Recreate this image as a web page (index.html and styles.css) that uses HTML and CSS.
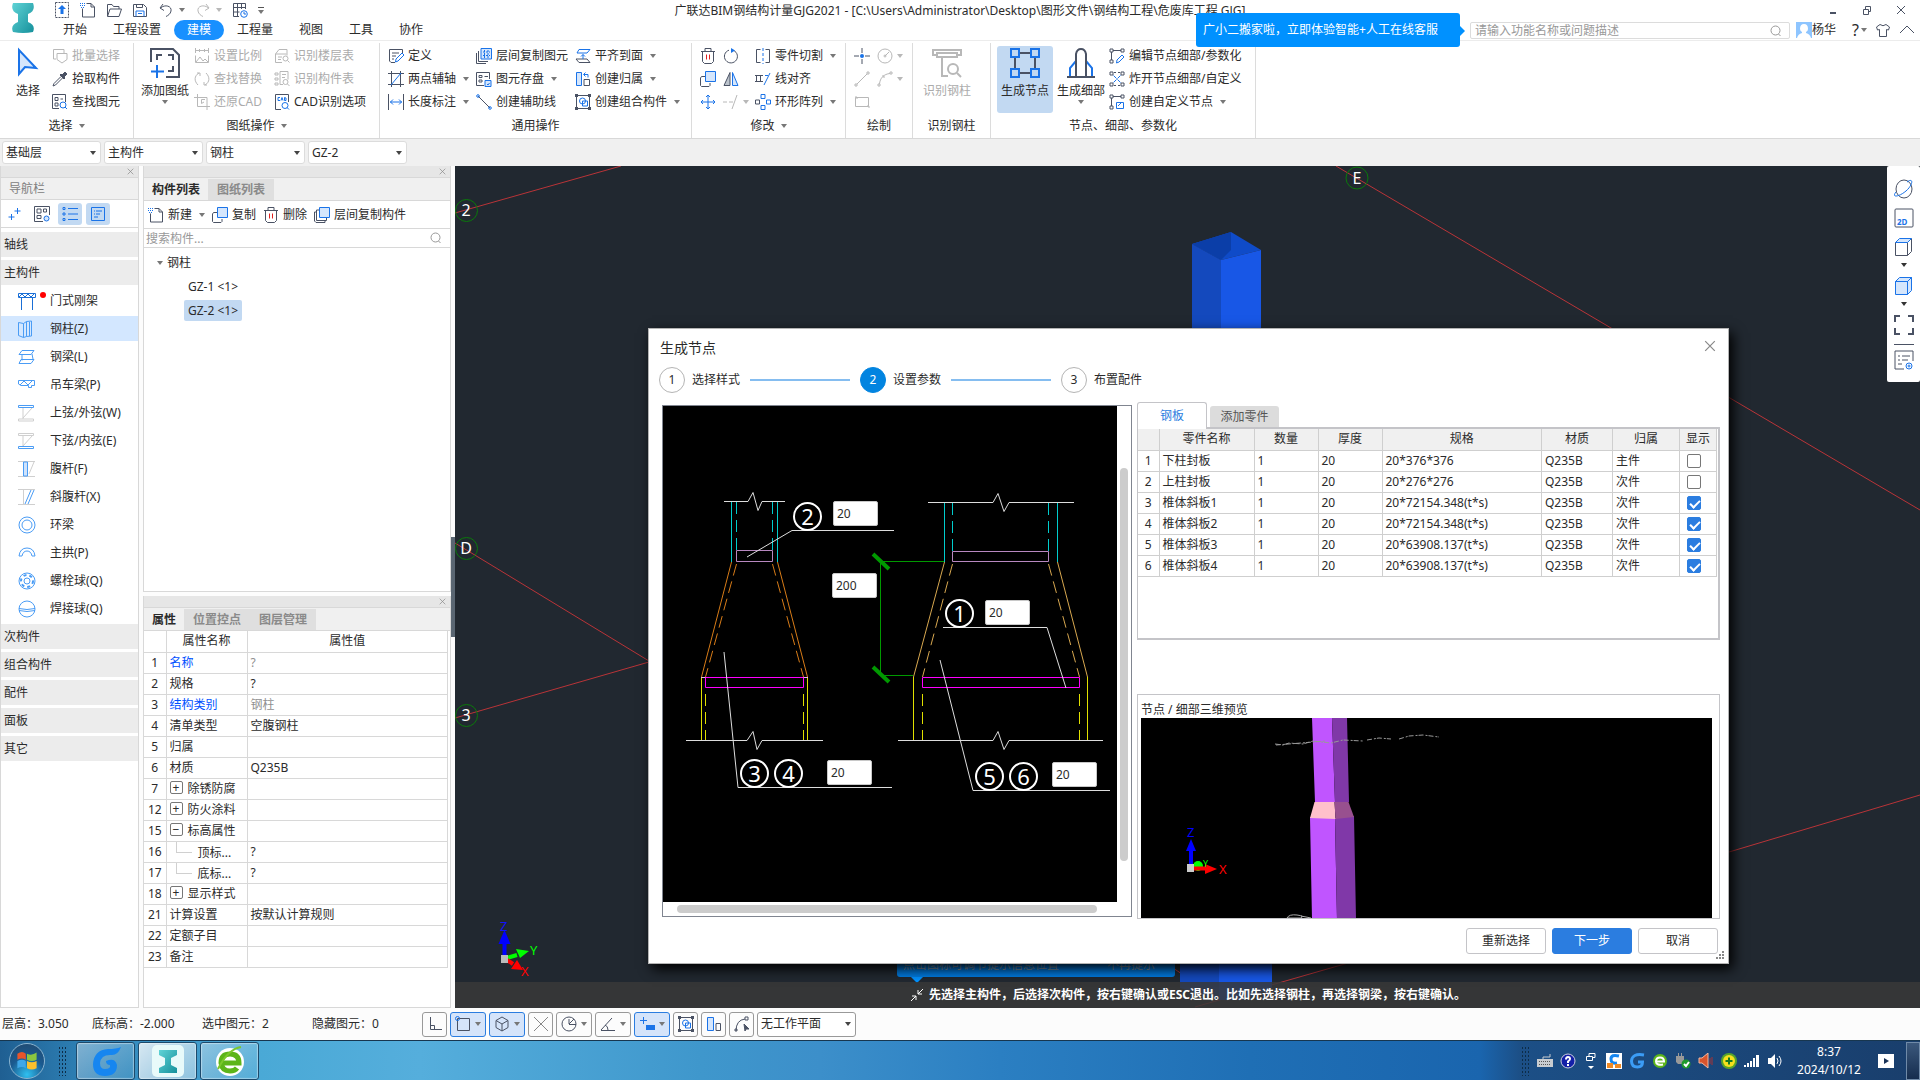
FILE: index.html
```html
<!DOCTYPE html>
<html lang="zh-CN">

<head>
    <meta charset="UTF-8">
    <meta name="viewport" content="width=device-width, initial-scale=1.0">
    <title>广联达BIM钢结构计量GJG2021</title>
    <link rel="stylesheet" href="styles.css">
</head>

<body>
    <!-- Shared icons -->
    <svg class="sprite" aria-hidden="true">
        <symbol id="i-upload" viewBox="0 0 16 16"><path stroke-dasharray="2 1" d="M1.500 .5h13v15h-13z"/><path class="af" d="M8 3l4 4H9.500v5h-3V7H4z"/></symbol>
        <symbol id="i-new" viewBox="0 0 16 16"><path d="M6.500 1.500H11L14.500 5v10h-12V6.500M11 1.500V5h3.500"/><path class="a" stroke-dasharray="1 1" d="M0 1.500h5M0 3.500h5M1 5.500h4"/></symbol>
        <symbol id="i-open" viewBox="0 0 16 16"><path d="M1.500 14V2.500h4.500l1.500 2h5.500V7M1.500 14.500L4 7h11.500L13 14.500z"/></symbol>
        <symbol id="i-save" viewBox="0 0 16 16"><path d="M1.500 2.500h10l3 3v9h-13zM4.500 2.500v3h6v-3"/><path class="a" d="M4 14.500v-5.500h8v5.500M6 11.500h4"/></symbol>
        <symbol id="i-undo" viewBox="0 0 16 16"><path d="M5 2L2 6l4 2.500M2.500 6C7 2 14 4 13 9c-.5 3-3 4.500-5 5.500"/></symbol>
        <symbol id="i-redo" viewBox="0 0 16 16"><path d="M11 2l3 4-4 2.500M13.500 6C9 2 2 4 3 9c.5 3 3 4.500 5 5.500"/></symbol>
        <symbol id="i-grid" viewBox="0 0 16 16"><path d="M7 14.500H1.500v-13h12V7M1.500 5.500h12M1.500 10h6M5.500 1.500v13M9.500 1.500V7"/><circle class="a" cx="12" cy="12" r="3.300"/><path class="a" d="M12 10v2h2"/></symbol>
        <symbol id="i-batch" viewBox="0 0 16 16"><path d="M12 6V1.500H1.500V11H4M5 5.500h10v6L10 15l-5-3.500z"/></symbol>
        <symbol id="i-pick" viewBox="0 0 16 16"><path class="df" d="M8 4l4 4 1-1-1-1 3-3-2-2-3 3-1-1z"/><path d="M9 5.500L2 12.500 1 15l2.500-1 7-7"/></symbol>
        <symbol id="i-find" viewBox="0 0 16 16"><path d="M7 14.500H.500V.500h13V8M3 3.500h3v3H3zM3 9h3v3H3zM8.500 5H11"/><circle class="a" cx="11" cy="11" r="3"/><path class="a" d="M13 13l2 2"/></symbol>
        <symbol id="i-scale" viewBox="0 0 16 16"><path d="M1 2.500h14M1.500 0v5M14.500 0v5M5.500 1v3M10.500 1v3M1.500 7.500v7h13v-7M2 14l4-5 3 4 2-2 3 3"/></symbol>
        <symbol id="i-swap" viewBox="0 0 16 16"><path d="M4 14c-4-4-4-9 1-12M3 2h3v3M12 2c4 4 4 9-1 12M13 14h-3v-3"/></symbol>
        <symbol id="i-restore" viewBox="0 0 16 16"><path d="M3.500 0v12.500H16M0 3.500h13V16M11 5.500H7.500v4L10 8"/></symbol>
        <symbol id="i-table" viewBox="0 0 16 16"><path d="M8 14.500H1.500V6L5 1.500h8v6M1.500 6h11M4 9h4M4 11.500h3"/><circle cx="11.500" cy="10.500" r="2.500"/><path d="M13.500 12.500l2 2"/></symbol>
        <symbol id="i-parts" viewBox="0 0 16 16"><path d="M6 .500h8v8M6 .500v13h3M8 3.500h4M8 6.500h3M1 2h3v2H1zM1 7h3v2H1zM1 12h3v2H1z"/><circle cx="11.500" cy="11" r="2.500"/><path d="M13.500 13l2 2"/></symbol>
        <symbol id="i-cad" viewBox="0 0 16 16"><path d="M7 15.500H1.500V.500h13V8"/><path class="a" d="M6 3.500H4v3h2M7 6.500l1-3 1 3M10.500 3.500v3h1.500V4z"/><circle class="a" cx="11" cy="11.500" r="3"/><path class="a" d="M13 13.500l2 2"/></symbol>
        <symbol id="i-define" viewBox="0 0 16 16"><path d="M7 14.500H3L1.500 13V1.500h13V5M4 5h7M4 8h4M4 11h2"/><path class="a" d="M7.500 14l.5-3 6-6 2 2-6 6z"/></symbol>
        <symbol id="i-axis" viewBox="0 0 16 16"><path d="M3.500 0v16M12.500 0v16M0 2.500h16M0 13.500h16"/><path class="a" d="M3 14L13 2"/></symbol>
        <symbol id="i-length" viewBox="0 0 16 16"><path d="M.500 0v16M15.500 0v16"/><path class="a" d="M2 8h12M5 5.500L2.500 8 5 10.500M11 5.500L13.500 8 11 10.500"/></symbol>
        <symbol id="i-layercopy" viewBox="0 0 16 16"><path d="M.500 5v10.500H10M2.500 3v10.500H12"/><path class="al" d="M5 .500h10.500V11H5z"/><path class="a" stroke-dasharray="2 1" d="M7 4h7M7 7.500h7M8.500 2v8M12 2v8"/></symbol>
        <symbol id="i-archive" viewBox="0 0 16 16"><path d="M8 14.500H.500V1.500h13V8M3 4.500h3v2H3zM3 9h3v2H3zM8.500 5.500H12"/><path class="al" d="M9 9.500h6v6H9z"/><path class="a" d="M11 13l1 1 1.500-2"/></symbol>
        <symbol id="i-auxline" viewBox="0 0 16 16"><path d="M2 2l12 12"/><circle class="a" cx="2" cy="2" r="1.300"/><circle class="a" cx="14" cy="14" r="1.300"/></symbol>
        <symbol id="i-align" viewBox="0 0 16 16"><path class="a" d="M4 1.500h11L12 5H2z"/><path d="M4 14.500h11L12 11H1z"/><path class="a" d="M8 11V6.500M6 8.500l2-2 2 2"/></symbol>
        <symbol id="i-owner" viewBox="0 0 16 16"><path class="al" d="M1.500 1.500h5v13h-5z"/><path d="M9 8.500h5.500v6H9z"/><path class="a" d="M9 3.500h4v3M10.500 1.500L8.500 3.500l2 2"/></symbol>
        <symbol id="i-group" viewBox="0 0 16 16"><path d="M1.500 1.500h13v13h-13z"/><circle class="a" cx="7.500" cy="7" r="3"/><path class="a" d="M7.500 7h5v5h-5z"/><path class="df" stroke="none" d="M0 0h3v3H0zM13 0h3v3h-3zM0 13h3v3H0zM13 13h3v3h-3z"/></symbol>
        <symbol id="i-trash" viewBox="0 0 16 16"><path d="M1 3.500h14M5 3V.500h6V3M2.500 4v9.500l2 2h7l2-2V4"/><path class="r" d="M6.500 6.500v5M9.500 6.500v5"/></symbol>
        <symbol id="i-rotate" viewBox="0 0 16 16"><path d="M9 2A6.500 6.500 0 1 1 6 2.200"/><path class="af" d="M8 0l4 2.500L8 5z"/></symbol>
        <symbol id="i-copy" viewBox="0 0 16 16"><path d="M5 5.500H1.500L.500 7v7.500l1 1H9l1-1V12"/><path class="al" d="M5.500 .500h10v10h-10z"/></symbol>
        <symbol id="i-copies" viewBox="0 0 16 16"><path d="M3 5H.500v9l1.500 1.500h9V13M5.500 3H2.500v10.500h10V11"/><path class="al" d="M5.500 .500h10v10h-10z"/></symbol>
        <symbol id="i-mirror" viewBox="0 0 16 16"><path fill="#bcc3cc" d="M7 1.500v13H1z"/><path class="al" d="M9.500 1.500v13H15z"/></symbol>
        <symbol id="i-move" viewBox="0 0 16 16"><path class="a" d="M8 1v14M1 8h14M6 3l2-2 2 2M6 13l2 2 2-2M3 6L1 8l2 2M13 6l2 2-2 2"/></symbol>
        <symbol id="i-extend" viewBox="0 0 16 16"><path d="M0 8h4M6 8h4M14 1L9 15"/></symbol>
        <symbol id="i-cut" viewBox="0 0 16 16"><path d="M5.500 1.500h-4v13h4M10.500 1.500h4v13h-4"/><path class="a" stroke-dasharray="3 2" d="M8 0v16"/></symbol>
        <symbol id="i-linealign" viewBox="0 0 16 16"><path d="M0 4.500h8M0 10.500h8M1.500 4v6M5.500 4v6"/><path class="a" d="M15 2L9 14M10 4.500h3"/></symbol>
        <symbol id="i-array" viewBox="0 0 16 16"><path class="a" d="M6 .500h4v4H6zM6 11.500h4v4H6zM11.500 6h4v4h-4z"/><path d="M.500 6h4v4h-4z"/></symbol>
        <symbol id="i-point" viewBox="0 0 16 16"><path d="M8 0v5M8 11v5M0 8h5M11 8h5"/><circle class="af" cx="8" cy="8" r="2"/></symbol>
        <symbol id="i-circle" viewBox="0 0 16 16"><circle cx="8" cy="8" r="7"/><path d="M8 8l4-4"/><circle cx="8" cy="8" r="1"/></symbol>
        <symbol id="i-line" viewBox="0 0 16 16"><path d="M3 13L13 3M1 13h2v2H1zM13 1h2v2h-2z"/></symbol>
        <symbol id="i-arc" viewBox="0 0 16 16"><path d="M2.500 13C3 7 7 3 13 2.500M1 13h2v2H1zM13 1h2v2h-2zM5 5h2v2"/></symbol>
        <symbol id="i-rect" viewBox="0 0 16 16"><path d="M1.500 3.500h13v9h-13zM1 3h2v2M13 12h2v2"/></symbol>
        <symbol id="i-nodeedit" viewBox="0 0 16 16"><path d="M1 1h3v3H1zM12 1h3v3h-3zM1 12h3v3H1zM4 2.500h8M2.500 4v8"/><path class="a" d="M7.500 15l.5-3 5-5 2 2-5 5z"/></symbol>
        <symbol id="i-nodeburst" viewBox="0 0 16 16"><path d="M1 1h3v3H1zM12 1h3v3h-3zM1 12h3v3H1zM12 12h3v3h-3zM5 1.500h2M9 1.500h2M5 14.500h2M9 14.500h2"/><path class="a" d="M4.500 4.500l3 3M11.500 4.500l-3 3M4.500 11.500l3-3M11.500 11.500l-3-3"/></symbol>
        <symbol id="i-nodenew" viewBox="0 0 16 16"><path d="M1 1h3v3H1zM12 1h3v3h-3zM1 12h3v3H1zM4 2.500h8M2.500 4v8"/><path class="a" d="M7.500 8.500h7v6h-7zM9 12l4-4"/></symbol>
        <symbol id="i-search" viewBox="0 0 12 12"><circle cx="5.500" cy="5.500" r="4.500"/><path d="M8.500 9l2 2"/></symbol>
        <symbol id="i-x" viewBox="0 0 10 10"><path d="M1 1l8 8M9 1L1 9"/></symbol>
        <symbol id="i-cube" viewBox="0 0 20 20"><path d="M1.500 5.500h12v13h-12zM13.500 18.500l4-4v-13"/><path class="al" d="M1.500 5.500l4-4h12l-4 4z"/></symbol>
        <symbol id="i-cube2" viewBox="0 0 20 20"><path class="al" d="M1.500 5.500h12v13h-12zM13.500 18.500l4-4v-13l-4 4zM1.500 5.500l4-4h12l-4 4z"/></symbol>
    </svg>

    <header class="header">
        <svg class="logo" viewBox="4 2 22 32">
            <defs><linearGradient id="teal" x1="0" y1="0" x2="1" y2="1"><stop offset="0" stop-color="#5fd3d6"/><stop offset="1" stop-color="#15909b"/></linearGradient></defs>
            <path fill="url(#teal)" d="M5 3h20q3 8-5 11v8q8 3 5 10-10 2-20 0-3-7 5-10v-8Q2 11 5 3z"/>
        </svg>
        <div class="quick">
            <button><svg class="icon"><use href="#i-upload"/></svg></button>
            <button><svg class="icon"><use href="#i-new"/></svg></button>
            <button><svg class="icon"><use href="#i-open"/></svg></button>
            <button><svg class="icon"><use href="#i-save"/></svg></button>
            <button><svg class="icon"><use href="#i-undo"/></svg><i class="caret"></i></button>
            <button class="off"><svg class="icon"><use href="#i-redo"/></svg><i class="caret"></i></button>
            <button><svg class="icon"><use href="#i-grid"/></svg></button>
            <button class="more"><i class="caret"></i></button>
        </div>
        <div class="title">广联达BIM钢结构计量GJG2021 - [C:\Users\Administrator\Desktop\图形文件\钢结构工程\危废库工程.GJG]</div>
        <div class="winctl">
            <button><svg width="10" height="10"><path d="M2 8h6" stroke-width="2"/></svg></button>
            <button><svg width="10" height="10"><path d="M1.500 4.500h5v5h-5zM3.500 4V1.500h5v5H7"/></svg></button>
            <button><svg width="10" height="10"><use href="#i-x"/></svg></button>
        </div>
        <nav class="menu">
            <a href="#">开始</a>
            <a href="#">工程设置</a>
            <a href="#" class="active">建模</a>
            <a href="#">工程量</a>
            <a href="#">视图</a>
            <a href="#">工具</a>
            <a href="#">协作</a>
        </nav>
        <div class="account">
            <div class="search">
                <div class="bubble">广小二搬家啦，立即体验智能+人工在线客服</div>
                <input type="text" aria-label="搜索功能" placeholder="请输入功能名称或问题描述">
                <svg class="search-icon"><use href="#i-search"/></svg>
            </div>
            <svg class="avatar" viewBox="0 0 16 16"><rect width="16" height="16" fill="#8ec5ff"/><path fill="#fff" d="M8 2q4 0 4 5 0 2-2 3v1q4 1 5 5H1q1-4 5-5v-1Q4 9 4 7q0-5 4-5z"/></svg>
            <span class="user">杨华</span>
            <button class="help">?<i class="caret"></i></button>
            <button><svg class="icon" viewBox="0 0 16 16"><path d="M5 2.500L1.500 5l1 3 2-.5v7h7v-7l2 .5 1-3L11 2.500Q8 5 5 2.500z"/></svg></button>
            <button><svg class="icon" viewBox="0 0 16 16"><path d="M1 11l7-7 7 7"/></svg></button>
        </div>
    </header>

    <div class="ribbon">
        <section class="group g-select">
            <div class="group-body">
                <button class="big"><svg class="big-icon" viewBox="0 0 32 32"><path class="al" stroke-width="2" d="M7 3v24l6-7 11 1z"/></svg>选择</button>
                <div class="stack">
                    <button class="cmd off"><svg class="icon"><use href="#i-batch"/></svg>批量选择</button>
                    <button class="cmd"><svg class="icon"><use href="#i-pick"/></svg>拾取构件</button>
                    <button class="cmd"><svg class="icon"><use href="#i-find"/></svg>查找图元</button>
                </div>
            </div>
            <h2>选择<i class="caret"></i></h2>
        </section>
        <section class="group g-sheet">
            <div class="group-body">
                <button class="big"><svg class="big-icon" viewBox="0 0 32 32"><path stroke-width="2" d="M2 15V2h22l6 6v22H17M8 13V8h5M19 8h5v5M24 19v5h-5"/><path class="a" stroke-width="2" d="M8 18v13M2 24.500h13"/></svg>添加图纸<i class="caret"></i></button>
                <div class="stack">
                    <button class="cmd off"><svg class="icon"><use href="#i-scale"/></svg>设置比例</button>
                    <button class="cmd off"><svg class="icon"><use href="#i-swap"/></svg>查找替换</button>
                    <button class="cmd off"><svg class="icon"><use href="#i-restore"/></svg>还原CAD</button>
                </div>
                <div class="stack">
                    <button class="cmd off"><svg class="icon"><use href="#i-table"/></svg>识别楼层表</button>
                    <button class="cmd off"><svg class="icon"><use href="#i-parts"/></svg>识别构件表</button>
                    <button class="cmd"><svg class="icon"><use href="#i-cad"/></svg>CAD识别选项</button>
                </div>
            </div>
            <h2>图纸操作<i class="caret"></i></h2>
        </section>
        <section class="group g-common">
            <div class="group-body">
                <div class="stack">
                    <button class="cmd"><svg class="icon"><use href="#i-define"/></svg>定义</button>
                    <button class="cmd"><svg class="icon"><use href="#i-axis"/></svg>两点辅轴<i class="caret"></i></button>
                    <button class="cmd"><svg class="icon"><use href="#i-length"/></svg>长度标注<i class="caret"></i></button>
                </div>
                <div class="stack">
                    <button class="cmd"><svg class="icon"><use href="#i-layercopy"/></svg>层间复制图元</button>
                    <button class="cmd"><svg class="icon"><use href="#i-archive"/></svg>图元存盘<i class="caret"></i></button>
                    <button class="cmd"><svg class="icon"><use href="#i-auxline"/></svg>创建辅助线</button>
                </div>
                <div class="stack">
                    <button class="cmd"><svg class="icon"><use href="#i-align"/></svg>平齐到面<i class="caret"></i></button>
                    <button class="cmd"><svg class="icon"><use href="#i-owner"/></svg>创建归属<i class="caret"></i></button>
                    <button class="cmd"><svg class="icon"><use href="#i-group"/></svg>创建组合构件<i class="caret"></i></button>
                </div>
            </div>
            <h2>通用操作</h2>
        </section>
        <section class="group g-modify">
            <div class="group-body">
                <div class="stack pairs">
                    <button class="cmd"><svg class="icon"><use href="#i-trash"/></svg></button>
                    <button class="cmd"><svg class="icon"><use href="#i-rotate"/></svg></button>
                    <button class="cmd"><svg class="icon"><use href="#i-copy"/></svg></button>
                    <button class="cmd"><svg class="icon"><use href="#i-mirror"/></svg></button>
                    <button class="cmd"><svg class="icon"><use href="#i-move"/></svg></button>
                    <button class="cmd off"><svg class="icon"><use href="#i-extend"/></svg><i class="caret"></i></button>
                </div>
                <div class="stack">
                    <button class="cmd"><svg class="icon"><use href="#i-cut"/></svg>零件切割<i class="caret"></i></button>
                    <button class="cmd"><svg class="icon"><use href="#i-linealign"/></svg>线对齐</button>
                    <button class="cmd"><svg class="icon"><use href="#i-array"/></svg>环形阵列<i class="caret"></i></button>
                </div>
            </div>
            <h2>修改<i class="caret"></i></h2>
        </section>
        <section class="group g-draw">
            <div class="group-body">
                <div class="stack pairs">
                    <button class="cmd"><svg class="icon"><use href="#i-point"/></svg></button>
                    <button class="cmd off"><svg class="icon"><use href="#i-circle"/></svg><i class="caret"></i></button>
                    <button class="cmd off"><svg class="icon"><use href="#i-line"/></svg></button>
                    <button class="cmd off"><svg class="icon"><use href="#i-arc"/></svg><i class="caret"></i></button>
                    <button class="cmd off"><svg class="icon"><use href="#i-rect"/></svg></button>
                </div>
            </div>
            <h2>绘制</h2>
        </section>
        <section class="group g-detect">
            <div class="group-body">
                <button class="big off"><svg class="big-icon" viewBox="0 0 32 32"><path stroke-width="2" d="M6 8H2V3h28v5h-4M6 6h20v4H6zM11 10v19h6"/><circle stroke-width="2" cx="22" cy="22" r="5"/><path stroke-width="2" d="M26 26l4 4"/></svg>识别钢柱</button>
            </div>
            <h2>识别钢柱</h2>
        </section>
        <section class="group g-node">
            <div class="group-body">
                <button class="big on"><svg class="big-icon" viewBox="0 0 32 32"><path stroke-width="2" d="M10 6h12M10 26h12M6 10v12M26 10v12"/><path class="a" stroke-width="2" d="M2 2h8v8H2zM22 2h8v8h-8zM2 22h8v8H2zM22 22h8v8h-8z"/></svg>生成节点</button>
                <button class="big"><svg class="big-icon" viewBox="0 0 32 32"><path class="a" stroke-width="2" d="M11 14l-6 7v8M21 14l6 7v8M11 20v9M21 20v9"/><path stroke-width="2" d="M2 30h28M11 29V7q1-5 5-5t5 5v22"/></svg>生成细部<i class="caret"></i></button>
                <div class="stack">
                    <button class="cmd"><svg class="icon"><use href="#i-nodeedit"/></svg>编辑节点细部/参数化</button>
                    <button class="cmd"><svg class="icon"><use href="#i-nodeburst"/></svg>炸开节点细部/自定义</button>
                    <button class="cmd"><svg class="icon"><use href="#i-nodenew"/></svg>创建自定义节点<i class="caret"></i></button>
                </div>
            </div>
            <h2>节点、细部、参数化</h2>
        </section>
    </div>

    <div class="filters">
        <label class="combo"><select aria-label="楼层"><option>基础层</option></select></label>
        <label class="combo"><select aria-label="构件大类"><option>主构件</option></select></label>
        <label class="combo"><select aria-label="构件类型"><option>钢柱</option></select></label>
        <label class="combo"><select aria-label="构件"><option>GZ-2</option></select></label>
    </div>

    <main class="workspace">
        <aside class="navpane">
            <div class="strip"><button><svg class="x"><use href="#i-x"/></svg></button></div>
            <div class="pane-title">导航栏</div>
            <div class="nav-tools">
                <button><svg class="icon" viewBox="0 0 16 16"><path class="a" d="M11.500 2v6M8.500 5h6M5.500 8v6M2.500 11h6"/></svg></button>
                <button><svg class="icon" viewBox="0 0 16 16"><path d="M9 15.500H.500V.500h15V9M3 3h4v4H3zM9.500 3h3v3h-3zM3 9.500h4v3H3z"/><circle class="al" cx="12.500" cy="12.500" r="2.500"/></svg></button>
                <button class="on"><svg class="icon" viewBox="0 0 16 16"><path class="a" d="M6 2.500h10M6 8h10M6 13.500h10M1 1.500h2v2H1zM1 7h2v2H1zM1 12.500h2v2H1z"/></svg></button>
                <button class="on"><svg class="icon" viewBox="0 0 16 16"><path class="a" d="M1.500 1.500h13v13h-13zM4 5h1M6 5h6M4 8h1M6 8h4M4 11h4"/></svg></button>
            </div>
            <div class="nav-list">
                <button class="nav-head">轴线</button>
                <button class="nav-head">主构件</button>
                <button class="nav-item dot"><svg viewBox="0 0 18 18"><path d="M.500 1.500h17v4H.500zM1 5l3-3 3 3 3-3 3 3 3-3M3.500 6v12M14.500 6v12" stroke="#1a6fd6"/></svg>门式刚架</button>
                <button class="nav-item on"><svg viewBox="0 0 18 18"><path d="M.500 2.500l5 1v14l-5-2zM5.500 3.500l3-2 5-.5v15l-5 .5-3 1M8.500 1.500v15M11.500 2v14"/></svg>钢柱(Z)</button>
                <button class="nav-item"><svg viewBox="0 0 18 18"><path d="M4 2.500h12l-3 4H1zM4 6.500v6M14 6l1 5M3 11.500h13l-3 4H1z"/></svg>钢梁(L)</button>
                <button class="nav-item"><svg viewBox="0 0 18 18"><path d="M.500 4.500h16v5h-3v2h-3v-2H3L.500 8zM2 9l4-4 4 4 4-4"/></svg>吊车梁(P)</button>
                <button class="nav-item"><svg viewBox="0 0 18 18"><path class="g" d="M5 4v11M5 14L14 4M.500 15h15v2H.500z"/><path d="M.500 1.500h15v2H.500z"/></svg>上弦/外弦(W)</button>
                <button class="nav-item"><svg viewBox="0 0 18 18"><path class="g" d="M5 4v11M5 14L14 4M.500 1.500h15v2H.500z"/><path d="M.500 14.500h15v2H.500z"/></svg>下弦/内弦(E)</button>
                <button class="nav-item"><svg viewBox="0 0 18 18"><path class="g" d="M0 1.500h17M0 16.500h17M11 14L16 2"/><path fill="#cfe3fc" d="M5.500 2v14h4V2z"/></svg>腹杆(F)</button>
                <button class="nav-item"><svg viewBox="0 0 18 18"><path class="g" d="M0 1.500h17M0 16.500h17M5.500 2v14"/><path d="M7 16l6-14M10 16l6-14"/></svg>斜腹杆(X)</button>
                <button class="nav-item"><svg viewBox="0 0 18 18"><circle cx="9" cy="9" r="8"/><circle cx="9" cy="9" r="5"/></svg>环梁</button>
                <button class="nav-item"><svg viewBox="0 0 18 18"><path d="M1 12q1-8 8-8t8 8h-3q-1-5-5-5t-5 5z"/></svg>主拱(P)</button>
                <button class="nav-item"><svg viewBox="0 0 18 18"><circle cx="9" cy="9" r="8"/><circle cx="9" cy="9" r="3"/><circle cx="9" cy="9" r="6" stroke-width="2" stroke-dasharray="3 3"/></svg>螺栓球(Q)</button>
                <button class="nav-item"><svg viewBox="0 0 18 18"><circle cx="9" cy="9" r="8"/><path d="M1 8.500q8 2 16 0M1 10.500q8 2 16 0"/></svg>焊接球(Q)</button>
                <button class="nav-head">次构件</button>
                <button class="nav-head">组合构件</button>
                <button class="nav-head">配件</button>
                <button class="nav-head">面板</button>
                <button class="nav-head">其它</button>
            </div>
        </aside>

        <div class="side">
            <section class="panel list-panel">
                <div class="strip"><button><svg class="x"><use href="#i-x"/></svg></button></div>
                <div class="tabs"><button class="active">构件列表</button><button>图纸列表</button></div>
                <div class="list-tools">
                    <button class="cmd"><svg class="icon"><use href="#i-new"/></svg>新建<i class="caret"></i></button>
                    <button class="cmd"><svg class="icon"><use href="#i-copy"/></svg>复制</button>
                    <button class="cmd"><svg class="icon"><use href="#i-trash"/></svg>删除</button>
                    <button class="cmd"><svg class="icon"><use href="#i-copies"/></svg>层间复制构件</button>
                </div>
                <div class="list-search">
                    <input type="text" aria-label="搜索构件" placeholder="搜索构件...">
                    <svg class="search-icon"><use href="#i-search"/></svg>
                </div>
                <ul class="tree">
                    <li><i class="caret"></i>钢柱
                        <ul>
                            <li><span>GZ-1 &lt;1&gt;</span></li>
                            <li><span class="on">GZ-2 &lt;1&gt;</span></li>
                        </ul>
                    </li>
                </ul>
            </section>
            <section class="panel prop-panel">
                <div class="strip"><button><svg class="x"><use href="#i-x"/></svg></button></div>
                <div class="tabs"><button class="active">属性</button><button>位置控点</button><button>图层管理</button></div>
                <table class="props">
                    <thead><tr><th class="c-num"></th><th class="c-name">属性名称</th><th>属性值</th></tr></thead>
                    <tbody>
                        <tr><td>1</td><td class="key">名称</td><td class="dim">?</td></tr>
                        <tr><td>2</td><td>规格</td><td>?</td></tr>
                        <tr><td>3</td><td class="key">结构类别</td><td class="dim">钢柱</td></tr>
                        <tr><td>4</td><td>清单类型</td><td>空腹钢柱</td></tr>
                        <tr><td>5</td><td>归属</td><td></td></tr>
                        <tr><td>6</td><td>材质</td><td>Q235B</td></tr>
                        <tr><td>7</td><td><button class="fold">+</button>除锈防腐</td><td></td></tr>
                        <tr><td>12</td><td><button class="fold">+</button>防火涂料</td><td></td></tr>
                        <tr><td>15</td><td><button class="fold">−</button>标高属性</td><td></td></tr>
                        <tr><td>16</td><td><i class="branch"></i>顶标...</td><td>?</td></tr>
                        <tr><td>17</td><td><i class="branch"></i>底标...</td><td>?</td></tr>
                        <tr><td>18</td><td><button class="fold">+</button>显示样式</td><td></td></tr>
                        <tr><td>21</td><td>计算设置</td><td>按默认计算规则</td></tr>
                        <tr><td>22</td><td>定额子目</td><td></td></tr>
                        <tr><td>23</td><td>备注</td><td></td></tr>
                    </tbody>
                </table>
            </section>
        </div>
        <div class="splitter"><button aria-label="收起"></button></div>

        <div class="viewport">
            <svg class="scene" width="100%" height="100%">
                <g stroke="#b93438" fill="none">
                    <path d="M0 47L166 0M0 377L194 495M0 552L194 496M881 0L1465 344M1274 686L1465 629M900 795L740 841M700 790L760 830"/>
                </g>
                <g class="bubbles">
                    <circle cx="11.500" cy="44.500" r="11"/><circle cx="11.500" cy="382.500" r="11"/><circle cx="11.500" cy="549.500" r="11"/><circle cx="902" cy="12" r="11"/>
                    <text x="11" y="50">2</text><text x="11" y="388">D</text><text x="11" y="555">3</text><text x="902" y="18">E</text>
                </g>
                <path fill="#0f4bc8" d="M737 78l39-12 30 18-40 10z"/>
                <path fill="#0b3ea8" d="M737 78l39-12v18l-10 10z"/>
                <path fill="#1449bd" d="M737 78l29 16v106h-29zM725 790h39v44l-39-12z"/>
                <path fill="#1857e6" d="M766 94l40-10v116h-40zM764 790h53v32l-30 12h-23z"/>
                <g stroke-width="4">
                    <path stroke="#00f" d="M49.500 792v-18"/><path fill="#00f" d="M49.500 764l-6 14h12z"/>
                    <path stroke="#0f0" d="M52 792l10-3"/><path fill="#0f0" d="M74 785l-13-2 4 9z"/>
                    <path stroke="#f00" d="M52 794l6 4"/><path fill="#f00" d="M68 804l-12-1 6-9z"/>
                    <path fill="#bbb" d="M46 789h7v8h-7z"/>
                </g>
                <g class="axis-text"><text x="45" y="765" fill="#11f">Z</text><text x="75" y="789" fill="#0f0">Y</text><text x="66" y="810" fill="#f00">X</text></g>
            </svg>
            <div class="tip"><span>点击图标可调节提示信息位置</span><span>不再提示</span></div>
            <div class="hint"><svg class="icon" viewBox="0 0 16 16"><path d="M14 2L9 7M9 3v4h4M2 14l5-5M3 9h4v4"/></svg>先选择主构件，后选择次构件，按右键确认或ESC退出。比如先选择钢柱，再选择钢梁，按右键确认。</div>

            <div class="view-tools">
                <button><svg viewBox="0 0 20 20"><ellipse cx="10" cy="10" rx="8" ry="9"/><path class="a" d="M2 13C-3 19 5 18 12 12s8-14 1-9"/></svg></button>
                <button><svg viewBox="0 0 20 20"><rect x="1" y="1" width="18" height="18" rx="1"/><text x="3" y="17">2D</text></svg></button>
                <button><svg><use href="#i-cube"/></svg><i class="caret"></i></button>
                <button><svg><use href="#i-cube2"/></svg><i class="caret"></i></button>
                <button><svg viewBox="0 0 20 20"><path stroke-width="2" d="M1 7V1h5M14 1h5v6M19 13v6h-5M6 19H1v-6"/></svg></button>
                <button class="last"><svg viewBox="0 0 20 20"><path d="M10 19H1V1h18v10M4 6h2M8 6h8M4 10h2M8 10h6M4 14h4"/><circle class="a" cx="15" cy="16" r="3"/><circle class="a" cx="15" cy="16" r="1"/></svg></button>
            </div>

            <div class="dialog" role="dialog" aria-label="生成节点">
                <div class="dialog-head"><h1>生成节点</h1><button aria-label="关闭"><svg width="12" height="12"><use href="#i-x"/></svg></button></div>
                <ol class="steps">
                    <li><b>1</b>选择样式</li>
                    <li class="on"><b>2</b>设置参数</li>
                    <li><b>3</b>布置配件</li>
                </ol>
                <div class="dialog-body">
                    <div class="cad">
                        <div class="cad-canvas">
                            <svg viewBox="0 0 454 496">
                                <!-- left section -->
                                <g stroke="#0cc"><path d="M68.500 96v60M114.500 96v60"/><path class="dash" d="M73.500 96v48M109.500 96v48"/></g>
                                <path stroke="#b888c0" d="M73.500 144.500h36v11h-36z"/>
                                <g stroke="#d87c18"><path d="M68.500 156l-30 115M114.500 156l30 115"/><path class="dash" d="M73.500 158l-31 113M109.500 158l31 113"/></g>
                                <g stroke="#e0e000"><path d="M38.500 271v63M144.500 271v63"/><path class="dash" d="M42.500 288v46M140.500 288v46"/></g>
                                <path stroke="#e8b8e8" d="M38 271.500h107"/>
                                <path stroke="#f0f" d="M42.500 271.500h98v10h-98z"/>
                                <!-- right section -->
                                <g stroke="#0cc"><path d="M281.500 97v59M394.500 97v59"/><path class="dash" d="M289.500 97v48M385.500 97v48"/></g>
                                <path stroke="#b888c0" d="M289.500 145.500h96v10h-96z"/>
                                <g stroke="#d8a850"><path d="M281.500 156l-31 115M394.500 156l30 115"/><path class="dash" d="M289.500 158l-30 113M385.500 158l31 113"/></g>
                                <g stroke="#e0e000"><path d="M250.500 271v63M424.500 271v63"/><path class="dash" d="M259.500 288v46M416.500 288v46"/></g>
                                <path stroke="#f0f" d="M259.500 271.500h157v10h-157z"/>
                                <!-- dimension -->
                                <path stroke="#090" d="M281 155.500h-63.500v114H250"/>
                                <path stroke="#090" stroke-width="4" d="M210 148l16 15M210 261l16 15"/>
                                <!-- break lines and leaders -->
                                <g stroke="#ddd">
                                    <path d="M61 95.500h24l5-9 5 18 4-9h23M23 334.500h61l6-9 4 18 5-9h61"/>
                                    <path d="M265 96.500h65l5-9 6 18 5-9h65M235 334.500h95l5-9 6 18 5-9h94"/>
                                    <path d="M84 151l45-26.500h102M280 221.500h104l19 60.500M61 246l14 135.500h154M277 254l33 130.500h137"/>
                                </g>
                                <g class="marks">
                                    <circle cx="144.500" cy="110.500" r="13.500"/><text x="144.500" y="119">2</text>
                                    <circle cx="296.500" cy="207.500" r="13.500"/><text x="296.500" y="216">1</text>
                                    <circle cx="91.500" cy="367.500" r="13.500"/><text x="91.500" y="376">3</text>
                                    <circle cx="125.500" cy="367.500" r="13.500"/><text x="125.500" y="376">4</text>
                                    <circle cx="326.500" cy="370.500" r="13.500"/><text x="326.500" y="379">5</text>
                                    <circle cx="360.500" cy="370.500" r="13.500"/><text x="360.500" y="379">6</text>
                                </g>
                            </svg>
                            <input type="text" class="p-top" value="20" aria-label="板2厚度">
                            <input type="text" class="p-height" value="200" aria-label="高度">
                            <input type="text" class="p-mid" value="20" aria-label="板1厚度">
                            <input type="text" class="p-left" value="20" aria-label="板3 4厚度">
                            <input type="text" class="p-right" value="20" aria-label="板5 6厚度">
                        </div>
                        <div class="vbar"></div>
                        <div class="hbar"></div>
                    </div>
                    <div class="parts">
                        <div class="part-tabs"><button class="active">钢板</button><button>添加零件</button></div>
                        <div class="part-box">
                            <table class="part-table">
                                <thead><tr><th class="w-num"></th><th class="w-name">零件名称</th><th class="w-qty">数量</th><th class="w-qty">厚度</th><th>规格</th><th class="w-mat">材质</th><th class="w-own">归属</th><th class="w-show">显示</th></tr></thead>
                                <tbody>
                                    <tr><td>1</td><td>下柱封板</td><td>1</td><td>20</td><td>20*376*376</td><td>Q235B</td><td>主件</td><td><input type="checkbox" aria-label="显示1"></td></tr>
                                    <tr><td>2</td><td>上柱封板</td><td>1</td><td>20</td><td>20*276*276</td><td>Q235B</td><td>次件</td><td><input type="checkbox" aria-label="显示2"></td></tr>
                                    <tr><td>3</td><td>椎体斜板1</td><td>1</td><td>20</td><td>20*72154.348(t*s)</td><td>Q235B</td><td>次件</td><td><input type="checkbox" aria-label="显示3" checked></td></tr>
                                    <tr><td>4</td><td>椎体斜板2</td><td>1</td><td>20</td><td>20*72154.348(t*s)</td><td>Q235B</td><td>次件</td><td><input type="checkbox" aria-label="显示4" checked></td></tr>
                                    <tr><td>5</td><td>椎体斜板3</td><td>1</td><td>20</td><td>20*63908.137(t*s)</td><td>Q235B</td><td>次件</td><td><input type="checkbox" aria-label="显示5" checked></td></tr>
                                    <tr><td>6</td><td>椎体斜板4</td><td>1</td><td>20</td><td>20*63908.137(t*s)</td><td>Q235B</td><td>次件</td><td><input type="checkbox" aria-label="显示6" checked></td></tr>
                                </tbody>
                            </table>
                        </div>
                        <div class="preview">
                            <h3>节点 / 细部三维预览</h3>
                            <svg viewBox="0 0 571 201" preserveAspectRatio="xMinYMin slice">
                                <path fill="#c055ff" d="M171 0h20l3 84h-20zM169 99l25 1 2 101h-25z"/>
                                <path fill="#8038a8" d="M191 0h15l2 84-14 1zM194 100l19-2 2 103h-19z"/>
                                <path fill="#ffc0cb" d="M173.500 84h20l1 17-25.500-1z"/>
                                <path fill="#98508f" d="M193.500 84h14l5.500 15-18.500 2z"/>
                                <path stroke="#999" stroke-dasharray="5 2 2 1" fill="none" d="M134 26l8 1 6-2 14 1 10-3 18 2 12-3 20 1M226 22l12-2 12 1M258 21l10-3 14-1 16 2M135 27l50-4"/>
                                <path stroke="#aaa" fill="none" d="M146 200q2-4 10-3t4 3zM160 198l10 2"/>
                                <path stroke="#00f" stroke-width="4" d="M50 147v-16"/><path fill="#00f" d="M50 121l-5 12h10z"/>
                                <circle cx="57" cy="148" r="5" fill="#0f0"/>
                                <path stroke="#f00" stroke-width="4" d="M53 150.500h12"/><path fill="#f00" d="M76 151l-12-5v10z"/>
                                <path fill="#ccc" d="M46 146h7v8h-7z"/>
                                <g class="axis-text"><text x="46" y="119" fill="#00f">Z</text><text x="62" y="149" fill="#0f0" class="small">Y</text><text x="78" y="156" fill="#f00">X</text></g>
                            </svg>
                        </div>
                        <div class="actions">
                            <button>重新选择</button>
                            <button class="primary">下一步</button>
                            <button>取消</button>
                        </div>
                    </div>
                </div>
                <svg class="grip" width="9" height="9"><path fill="#888" d="M6 0h2v2H6zM3 3h2v2H3zM6 3h2v2H6zM0 6h2v2H0zM3 6h2v2H3zM6 6h2v2H6z"/></svg>
            </div>
        </div>
    </main>

    <footer class="status">
        <span>层高：3.050</span>
        <span>底标高：-2.000</span>
        <span>选中图元：2</span>
        <span>隐藏图元：0</span>
        <div class="snap">
            <button><svg class="icon" viewBox="0 0 16 16"><path d="M3.500 1v12.500H15M3.500 9.500h4v4"/></svg></button>
            <button class="on"><svg class="icon" viewBox="0 0 16 16"><path d="M2.500 2.500h12v12h-12z"/><circle class="a" cx="2.500" cy="2.500" r="2"/></svg><i class="caret"></i></button>
            <button class="on"><svg class="icon" viewBox="0 0 16 16"><path d="M8 1l6 3.500v7L8 15l-6-3.500v-7zM2 4.500L8 8l6-3.500M8 8v7"/></svg><i class="caret"></i></button>
            <button class="off"><svg class="icon" viewBox="0 0 16 16"><path d="M1 1l14 14M15 1L1 15" stroke="#888"/></svg></button>
            <button><svg class="icon" viewBox="0 0 16 16"><circle cx="8" cy="8" r="7"/><path d="M8 8l5-5M8 8.500h7M8 8V3"/></svg><i class="caret"></i></button>
            <button><svg class="icon" viewBox="0 0 16 16"><path d="M1 14.500h14M1 14L12 2M5 9q3 1 3 5"/></svg><i class="caret"></i></button>
            <button class="on"><svg class="icon" viewBox="0 0 16 16"><path class="a" d="M4.500 1v7M1 4.500h7"/><path class="af" d="M7 9h9v5H7z"/></svg><i class="caret"></i></button>
            <button><svg class="icon"><use href="#i-group"/></svg></button>
            <button><svg class="icon" viewBox="0 0 16 16"><path class="al" d="M1.500 1.500h6v13h-6z"/><path d="M10 7.500h4.500v7H10z"/></svg></button>
            <button><svg class="icon" viewBox="0 0 16 16"><path d="M2 15Q2 4 11 3M1 13h2v2H1zM11 1h3v3h-3z"/><path class="df" d="M10 8l5 5h-3l-1 2z"/></svg></button>
            <label class="combo"><select aria-label="工作平面"><option>无工作平面</option></select></label>
        </div>
    </footer>

    <footer class="taskbar">
        <button class="start" aria-label="开始菜单"><svg viewBox="0 0 20 20"><path fill="#e8552a" d="M2 4q4-3 7 0v5q-3-2-7 0z"/><path fill="#8cc63f" d="M10 4q4 2 8-1v6q-4 2-8 0z"/><path fill="#3fa7e8" d="M2 10q4-2 7 0v6q-3-2-7 0z"/><path fill="#fbc02d" d="M10 10q4 2 8 0v6q-4 2-8 0z"/></svg></button>
        <i class="dots"></i>
        <button class="app"><svg viewBox="0 0 32 32"><path fill="#1686f0" d="M31 2q-3 8-9 8-11-1-12 8 0 6 5 6 6 0 5-4-4 0-4-4 9-4 11 4 0 11-12 11Q3 31 3 19 4 5 18 4q8 0 13-2z"/></svg></button>
        <button class="app current"><svg viewBox="0 0 32 32"><rect width="32" height="32" rx="5" fill="#e8fafa"/><path fill="url(#teal)" d="M7 5h18v5l-6 3v7l6 3v5H7v-5l6-3v-7l-6-3z"/></svg></button>
        <button class="app"><svg viewBox="0 0 32 32"><circle cx="16" cy="17" r="14" fill="#fff"/><path fill="none" stroke="#5cb51a" stroke-width="5" d="M7 18h18q0-9-9-9t-9 9q1 8 9 8 5 0 7-3"/><path fill="none" stroke="#7ac82c" stroke-width="2" d="M4 24Q14 4 27 2"/></svg></button>
        <div class="tray">
            <i class="dots"></i>
            <svg viewBox="0 0 16 16"><path fill="#c8ccd0" d="M0 6h16v8H0z"/><path stroke="#555" stroke-dasharray="1 1" d="M2 8.500h12M2 11.500h12"/><path stroke="#c8ccd0" fill="none" d="M6 6V4h7V1"/></svg>
            <svg viewBox="0 0 16 16"><circle cx="8" cy="8" r="7" fill="#1420a8" stroke="#ccd"/><path d="M6 6.500q0-2.500 2-2.500t2 2q0 1-2 2.500V10M8 11v2" stroke="#fff" stroke-width="2" fill="none"/></svg>
            <svg viewBox="0 0 16 16"><path fill="none" stroke="#fff" d="M3.500 3.500h6v4h-6zM6 3V.500h6v4h-2"/><path fill="#fff" d="M5 13h6l-3 3z"/></svg>
            <svg viewBox="0 0 16 16"><rect width="16" height="16" fill="#fff"/><path fill="none" stroke="#1686f0" stroke-width="3" d="M13 3Q5 1 5 6t6 4"/><path fill="#f08a24" d="M1 10h6v5H1zM9 11h6v4H9z"/></svg>
            <svg viewBox="0 0 16 16"><path fill="none" stroke="#3b9cf5" stroke-width="3" d="M15 2Q3 0 2.500 8q0 6 6 6 5 0 5-5H9"/></svg>
            <svg viewBox="0 0 16 16"><circle cx="8" cy="8" r="7" fill="#5cb51a"/><path fill="none" stroke="#fff" stroke-width="2" d="M4 8.500h8q0-4-4-4t-4 4 7 3"/></svg>
            <svg viewBox="0 0 16 16"><path fill="#999" d="M1 3h8v6L7 11H3L1 9zM3 0h1v3H3zM6 0h1v3H6z"/><circle cx="11" cy="11" r="4.500" fill="#1f9a2a"/><path fill="none" stroke="#fff" stroke-width="2" d="M9 11l2 2 3-4"/></svg>
            <svg viewBox="0 0 16 16"><path fill="#d8542c" stroke="#f4b8a0" d="M1 5h3l6-5v15l-6-5H1z"/><path stroke="#a33" fill="none" d="M12 5v6M14 4v8"/></svg>
            <svg viewBox="0 0 16 16"><circle cx="8" cy="8" r="8" fill="#58a52c"/><circle cx="8" cy="8" r="6" fill="#f7e01c"/><path stroke="#187a20" stroke-width="2" d="M4.500 8h7M8 4.500v7"/></svg>
            <svg viewBox="0 0 16 16"><path fill="#fff" d="M0 12h2v2H0zM3 10h2v4H3zM6 8h2v6H6zM9 5h2v9H9zM12 2h3v12h-3z"/></svg>
            <svg viewBox="0 0 16 16"><path fill="#fff" d="M1 5h3l4-4v14l-4-4H1z"/><path fill="none" stroke="#fff" d="M10 5q2 3 0 6M12 3q4 5 0 10"/></svg>
            <div class="clock"><span>8:37</span><span>2024/10/12</span></div>
            <svg viewBox="0 0 16 16"><rect y="1" width="16" height="14" fill="#fff"/><path fill="#1a3358" d="M6 5l5 3-5 3z"/></svg>
        </div>
        <button class="desktop" aria-label="显示桌面"></button>
    </footer>
</body>

</html>
```
FILE: styles.css
```css
* {
    box-sizing: border-box;
}

body {
    margin: 0;
    height: 100vh;
    display: flex;
    flex-direction: column;
    overflow: hidden;
    font-family: "Noto Sans", "Noto Sans CJK SC", sans-serif;
    font-size: 12px;
    line-height: 16px;
    color: #2b2b2b;
    background-color: #fcfcfc;
}

button, input, select {
    font: inherit;
    color: inherit;
}

button {
    border: none;
    background: none;
    padding: 0;
    white-space: nowrap;
}

a {
    color: inherit;
    text-decoration: none;
}

h1, h2, h3, ol, ul {
    margin: 0;
    padding: 0;
    font-weight: normal;
    font-size: 12px;
    list-style: none;
}

svg {
    flex: none;
    fill: none;
    stroke: #4a5264;
}

.sprite {
    position: absolute;
    width: 0;
    height: 0;
}

.icon {
    width: 16px;
    height: 16px;
}

/* icon colours */
.a {
    stroke: var(--accent, #1a73e8);
}

.af {
    fill: var(--accent, #1a73e8);
    stroke: none;
}

.al {
    fill: #d5e6fc;
    stroke: var(--accent, #1a73e8);
}

.df {
    fill: #4a5264;
}

.r {
    stroke: #e02020;
}

.off {
    --accent: #b8b8b8;
    color: #ababab;
}

.off svg {
    stroke: #b8b8b8;
}

.caret {
    display: inline-block;
    border: 3px solid transparent;
    border-top: 4px solid #777;
    border-bottom: none;
}

.off .caret {
    border-top-color: #b8b8b8;
}

/* header */
.header {
    display: grid;
    grid-template-columns: 50px 1fr auto 1fr 50px;
    grid-template-rows: 20px 20px;
    background-color: #fff;
    border-bottom: 1px solid #ececec;
    flex: none;
}

.logo {
    grid-row: 1 / 3;
    width: 22px;
    height: 32px;
    margin: 2px 0 0 12px;
    stroke: none;
}

.quick {
    display: flex;
    align-items: center;
    gap: 10px;
    padding-left: 4px;
}

.quick button {
    display: flex;
    align-items: center;
    gap: 5px;
}

.quick .more {
    padding-top: 2px;
    border-top: 1px solid #555;
}

.title {
    line-height: 22px;
}

.winctl {
    grid-column: 4 / 6;
    display: flex;
    justify-content: flex-end;
    align-items: center;
    gap: 24px;
    padding-right: 14px;
}

.winctl button {
    display: flex;
}

.menu {
    grid-column: 2 / 4;
    display: flex;
}

.menu a {
    padding: 0 13px;
    line-height: 19px;
    border-radius: 10px;
}

.menu .active {
    background-color: #1890ff;
    color: #fff;
}

.account {
    grid-column: 4 / 6;
    display: flex;
    justify-content: flex-end;
    align-items: center;
    padding-right: 5px;
}

.account button {
    margin-left: 8px;
    display: flex;
    align-items: center;
}

.account .help {
    margin-left: 16px;
    font-size: 16px;
    gap: 2px;
}

.search {
    position: relative;
    width: 320px;
    margin-right: 6px;
}

.search input {
    display: block;
    width: 100%;
    height: 17px;
    padding: 0 4px;
    border: 1px solid #dcdcdc;
    border-radius: 2px;
}

::placeholder {
    color: #999;
    opacity: 1;
}

.search-icon {
    position: absolute;
    right: 8px;
    top: 3px;
    width: 12px;
    height: 12px;
    stroke: #999;
}

.bubble {
    position: absolute;
    z-index: 5;
    right: 330px;
    top: -9px;
    padding: 0 7px;
    width: 264px;
    line-height: 34px;
    border-radius: 3px;
    background-color: #0091ff;
    color: #fff;
    white-space: nowrap;
}

.bubble::after {
    content: "";
    position: absolute;
    left: 100%;
    top: 13px;
    border: 5px solid transparent;
    border-left-color: #0091ff;
    border-right: none;
}

.avatar {
    width: 16px;
    height: 16px;
    stroke: none;
}

/* ribbon */
.ribbon {
    display: flex;
    flex: none;
    padding-top: 2px;
    background-color: #fff;
    border-bottom: 1px solid #d8d8d8;
}

.group {
    padding: 0 8px;
    border-right: 1px solid #dcdcdc;
}

.g-select {
    width: 134px;
    padding: 0 7px;
}

.g-sheet {
    width: 246px;
    padding: 0 7px;
}

.g-common {
    width: 312px;
}

.g-modify {
    width: 154px;
}

.g-draw {
    width: 67px;
}

.g-detect {
    width: 78px;
    padding: 0 4px;
}

.g-node {
    width: 265px;
    padding: 0 6px;
}

.group-body {
    display: flex;
    gap: 7px;
    height: 71px;
}

.g-select .group-body {
    gap: 3px;
}

.g-sheet .group-body {
    gap: 5px;
}

.g-sheet .stack + .stack {
    margin-left: 7px;
}

.g-node .group-body {
    gap: 0;
}

.group h2 {
    text-align: center;
    line-height: 24px;
}

.group h2 .caret {
    margin-left: 6px;
    vertical-align: 2px;
}

.stack {
    display: grid;
    grid-auto-rows: 23px;
    align-content: center;
    justify-items: start;
}

.pairs {
    grid-template-columns: 23px 25px;
}

.cmd {
    display: flex;
    align-items: center;
    gap: 4px;
}

.cmd .caret {
    margin-left: 3px;
}

.pairs .caret {
    margin-left: 0;
}

.big {
    min-width: 42px;
    height: 67px;
    margin-top: 3px;
    padding-top: 1px;
    border-radius: 3px;
    display: flex;
    flex-direction: column;
    align-items: center;
}

.big-icon {
    width: 32px;
    height: 32px;
    margin-bottom: 4px;
}

.big .caret {
    margin-top: 1px;
}

.g-detect .big {
    width: 60px;
}

.g-node .big {
    width: 56px;
}

.big.on {
    background-color: #c2d9f2;
}

/* filter row */
.filters {
    display: flex;
    flex: none;
    gap: 3px;
    padding: 2px;
    height: 27px;
    background-color: #f0f0f0;
}

.combo {
    position: relative;
    width: 99px;
}

.combo select {
    appearance: none;
    width: 100%;
    height: 23px;
    padding: 0 3px;
    border: 1px solid #dcdcdc;
    border-radius: 3px;
    background-color: #fff;
}

.combo::after {
    content: "";
    position: absolute;
    right: 5px;
    top: 10px;
    border: 3px solid transparent;
    border-top: 4px solid #444;
    border-bottom: none;
    pointer-events: none;
}

/* workspace */
.workspace {
    display: flex;
    flex: 1;
    min-height: 0;
}

.strip {
    height: 12px;
    flex: none;
    display: flex;
    justify-content: flex-end;
    padding-right: 4px;
    background-color: #e6e6e6;
    border-bottom: 1px solid #d8d8d8;
}

.strip button {
    display: flex;
    align-items: center;
}

.x {
    width: 7px;
    height: 7px;
    stroke: #888;
}

.navpane {
    width: 139px;
    flex: none;
    background-color: #fff;
    border: 1px solid #d8d8d8;
    border-top: none;
}

.pane-title {
    height: 22px;
    padding-left: 8px;
    line-height: 22px;
    color: #808080;
    background-color: #f0f0f0;
    border-bottom: 1px solid #d8d8d8;
}

.nav-tools {
    display: flex;
    gap: 4px;
    padding: 3px 1px;
    height: 28px;
    border-bottom: 1px solid #d8d8d8;
}

.nav-tools button {
    width: 24px;
    height: 22px;
    border-radius: 3px;
    display: grid;
    place-items: center;
}

.nav-tools .on {
    background-color: #c2d9f2;
}

.nav-list {
    display: flex;
    flex-direction: column;
    gap: 3px;
    padding-top: 4px;
}

.nav-list button {
    height: 25px;
    display: flex;
    align-items: center;
    gap: 14px;
}

.nav-list .nav-head {
    padding-left: 3px;
    background-color: #ececec;
}

.nav-item {
    position: relative;
    padding-left: 17px;
}

.nav-item.on {
    background-color: #d3e7ff;
}

.nav-item svg {
    width: 18px;
    height: 18px;
    stroke: #4a9cf5;
}

.nav-item .g {
    stroke: #cfcfcf;
}

.nav-list .dot::before {
    content: "";
    position: absolute;
    left: 39px;
    top: 4px;
    width: 6px;
    height: 6px;
    border-radius: 50%;
    background-color: #f00;
}

.side {
    width: 308px;
    flex: none;
    margin-left: 4px;
    display: flex;
    flex-direction: column;
    gap: 4px;
}

.panel {
    display: flex;
    flex-direction: column;
    background-color: #fff;
    border: 1px solid #d8d8d8;
    border-top: none;
}

.list-panel {
    height: 426px;
    flex: none;
}

.prop-panel {
    flex: 1;
}

.tabs {
    display: flex;
    height: 23px;
    padding-top: 1px;
    flex: none;
    background-color: #f0f0f0;
    border-bottom: 1px solid #d8d8d8;
}

.tabs button {
    padding: 0 9px;
    font-weight: bold;
    color: #8a8a8a;
    background-color: #dfdfdf;
}

.tabs .active {
    padding: 0 8px;
    color: #2b2b2b;
    background-color: #f0f0f0;
}

.list-tools {
    display: flex;
    gap: 7px;
    height: 28px;
    padding-left: 4px;
    border-bottom: 1px solid #d8d8d8;
}

.list-search {
    position: relative;
    border-bottom: 1px solid #d8d8d8;
}

.list-search input {
    width: 100%;
    height: 18px;
    padding: 0 2px;
    border: none;
    display: block;
}

.tree {
    padding: 3px 0 0 13px;
    line-height: 24px;
}

.tree .caret {
    margin-right: 4px;
    vertical-align: 2px;
}

.tree ul {
    padding-left: 27px;
}

.tree span {
    display: inline-block;
    padding: 0 4px;
    line-height: 21px;
    border-radius: 2px;
}

.tree .on {
    background-color: #c2d9f2;
}

table {
    border-collapse: collapse;
    table-layout: fixed;
}

th {
    font-weight: normal;
}

.props {
    width: 304px;
}

.props th, .props td {
    height: 21px;
    padding: 0 3px;
    border: 1px solid #d8d8d8;
    border-width: 0 1px 1px 0;
}

.props td:first-child,
.part-table td:first-child {
    text-align: center;
    padding: 0;
}

.props .c-num {
    width: 22px;
}

.props .c-name {
    width: 81px;
}

.key {
    color: #0050ff;
}

.dim {
    color: #909090;
}

.fold {
    width: 13px;
    height: 13px;
    margin-right: 5px;
    line-height: 10px;
    border: 1px solid #777;
    border-radius: 2px;
    vertical-align: 1px;
}

.branch {
    display: inline-block;
    width: 16px;
    height: 11px;
    margin: 0 6px 0 6px;
    border: 1px solid #d0d0d0;
    border-width: 0 0 1px 1px;
    vertical-align: 4px;
}

.splitter {
    width: 4px;
    flex: none;
    display: flex;
    align-items: center;
}

.splitter button {
    width: 4px;
    height: 100px;
    background-color: #5a6672;
}

/* model view */
.viewport {
    position: relative;
    flex: 1;
    min-width: 0;
    background-color: #212830;
}

.scene {
    display: block;
    stroke: none;
}

.bubbles circle {
    stroke: #0a7a0a;
}

.bubbles text {
    fill: #fff;
    font-size: 16px;
    text-anchor: middle;
}

.axis-text text {
    font-size: 13px;
    stroke: none;
}

.axis-text .small {
    font-size: 9px;
}

.tip {
    position: absolute;
    left: 442px;
    bottom: 31px;
    width: 278px;
    display: flex;
    justify-content: space-between;
    padding: 8px 20px 4px 6px;
    border-radius: 3px;
    background-color: #007be0;
    color: #8a9aa8;
}

.tip::after {
    content: "";
    position: absolute;
    left: 14px;
    top: 100%;
    border: 6px solid transparent;
    border-top-color: #0091ff;
    border-bottom: none;
}

.hint {
    position: absolute;
    left: 0;
    right: 0;
    bottom: 0;
    height: 26px;
    display: flex;
    justify-content: center;
    align-items: center;
    gap: 4px;
    font-weight: bold;
    color: #fff;
    background-color: rgba(56, 56, 56, 0.85);
}

.hint svg {
    stroke: #fff;
}

.view-tools {
    position: absolute;
    top: 0;
    right: 0;
    width: 33px;
    height: 216px;
    padding-top: 13px;
    display: flex;
    flex-direction: column;
    align-items: center;
    gap: 9px;
    background-color: #fff;
    border-radius: 2px;
}

.view-tools button {
    display: flex;
    flex-direction: column;
    align-items: center;
    gap: 6px;
}

.view-tools svg {
    width: 20px;
    height: 20px;
}

.view-tools .caret {
    border-top-color: #333;
}

.view-tools text {
    font-size: 8px;
    font-weight: bold;
    fill: #1a73e8;
    stroke: none;
}

.view-tools .last {
    padding-top: 5px;
    border-top: 1px solid #4a5264;
}

/* dialog */
.dialog {
    position: absolute;
    left: 193px;
    top: 162px;
    width: 1081px;
    height: 636px;
    padding: 0 8px 8px 13px;
    display: flex;
    flex-direction: column;
    background-color: #fff;
    border: 1px solid #b4b4b4;
    box-shadow: 4px 5px 12px #000;
}

.dialog-head {
    display: flex;
    justify-content: space-between;
    align-items: center;
    height: 38px;
    padding-right: 4px;
}

.dialog-head h1 {
    margin-left: -2px;
    font-size: 14px;
}

.dialog-head svg {
    stroke: #888;
}

.steps {
    display: flex;
    height: 26px;
    margin-left: -3px;
}

.steps li {
    display: flex;
    align-items: center;
}

.steps li + li::before {
    content: "";
    width: 100px;
    height: 2px;
    margin: 0 10px;
    background-color: #85bdf0;
}

.steps b {
    width: 26px;
    height: 26px;
    margin-right: 7px;
    line-height: 24px;
    text-align: center;
    font-weight: normal;
    border: 1px solid #b4b4b4;
    border-radius: 50%;
}

.steps .on b {
    background-color: #0284e0;
    border-color: #0284e0;
    color: #fff;
}

.dialog-body {
    flex: 1;
    display: flex;
    gap: 5px;
    padding-top: 9px;
}

.cad {
    width: 470px;
    height: 512px;
    margin-top: 3px;
    border: 1px solid #808590;
    display: grid;
    grid-template-columns: 454px 1fr;
    grid-template-rows: 496px 1fr;
}

.cad-canvas {
    position: relative;
    background-color: #000;
}

.cad-canvas svg {
    display: block;
}

.cad-canvas .dash {
    stroke-dasharray: 12 6;
}

.marks circle {
    stroke: #fff;
    stroke-width: 2;
}

.marks text {
    font-size: 22px;
    fill: #fff;
    stroke: none;
    text-anchor: middle;
}

.cad-canvas input {
    position: absolute;
    width: 45px;
    height: 25px;
    padding: 0 3px;
    border: 1px solid #c8c8c8;
    border-radius: 2px;
    background-color: #fff;
}

.cad-canvas .p-top {
    left: 170px;
    top: 95px;
}

.cad-canvas .p-height {
    left: 169px;
    top: 167px;
}

.cad-canvas .p-mid {
    left: 322px;
    top: 194px;
}

.cad-canvas .p-left {
    left: 164px;
    top: 354px;
}

.cad-canvas .p-right {
    left: 389px;
    top: 356px;
}

.vbar {
    width: 8px;
    height: 393px;
    margin: 62px 0 0 3px;
    border-radius: 4px;
    background-color: #ccc;
}

.hbar {
    width: 420px;
    height: 8px;
    margin: 3px 0 0 14px;
    border-radius: 4px;
    background-color: #ccc;
}

.parts {
    flex: 1;
    display: flex;
    flex-direction: column;
}

.part-tabs {
    display: flex;
    align-items: flex-end;
    gap: 3px;
    height: 25px;
}

.part-tabs button {
    width: 69px;
    height: 21px;
    color: #555;
    background-color: #dcdcdc;
    border-radius: 3px 3px 0 0;
}

.part-tabs .active {
    position: relative;
    width: 70px;
    height: 27px;
    margin-bottom: -2px;
    color: #2b7de0;
    background-color: #fff;
    border: 1px solid #c4c4c8;
    border-bottom: none;
}

.part-box {
    width: 583px;
    height: 213px;
    border: 2px solid #c4c4c8;
    border-left-width: 1px;
}

.part-table {
    width: 579px;
}

.part-table th, .part-table td {
    height: 21px;
    padding: 0 3px;
    border: 1px solid #cfcfcf;
    border-width: 0 1px 1px 0;
}

.part-table th {
    background-color: #f0f0f0;
}

.part-table .w-num {
    width: 21px;
}

.part-table .w-name {
    width: 95px;
}

.part-table .w-qty {
    width: 64px;
}

.part-table .w-mat {
    width: 71px;
}

.part-table .w-own {
    width: 67px;
}

.part-table .w-show {
    width: 37px;
    padding: 0;
}

.part-table input {
    appearance: none;
    display: block;
    position: relative;
    width: 14px;
    height: 14px;
    margin: 0 4px;
    border: 1px solid #777;
    border-radius: 2px;
}

.part-table input:checked {
    background-color: #2b7de0;
    border-color: #2b7de0;
}

.part-table input:checked::after {
    content: "";
    position: absolute;
    left: 4px;
    top: 1px;
    width: 4px;
    height: 8px;
    border: solid #fff;
    border-width: 0 2px 2px 0;
    transform: rotate(45deg);
}

.preview {
    width: 583px;
    height: 225px;
    margin-top: 54px;
    padding: 7px 7px 0 3px;
    border: 1px solid #c4c4c8;
}

.preview h3 {
    line-height: 16px;
}

.preview svg {
    display: block;
    width: 571px;
    height: 200px;
    background-color: #000;
    stroke: none;
}

.actions {
    display: flex;
    justify-content: flex-end;
    gap: 6px;
    margin-top: 9px;
    padding-right: 2px;
}

.actions button {
    width: 80px;
    height: 26px;
    border: 1px solid #c4c4c8;
    border-radius: 3px;
}

.actions .primary {
    color: #fff;
    background-color: #2b7de0;
    border-color: #2b7de0;
}

.grip {
    position: absolute;
    right: 3px;
    bottom: 3px;
    stroke: none;
}

/* status bar */
.status {
    display: grid;
    grid-template-columns: 90px 110px 110px 110px auto;
    justify-content: start;
    align-items: center;
    height: 32px;
    flex: none;
    padding-left: 2px;
    background-color: #fcfcfc;
}

.snap {
    display: flex;
    gap: 3px;
}

.snap button {
    height: 25px;
    min-width: 25px;
    padding: 0 4px;
    display: flex;
    align-items: center;
    justify-content: center;
    gap: 4px;
    border: 1px solid #999;
    border-radius: 3px;
}

.snap button:not(:has(.caret)) {
    padding: 0;
}

.snap .on {
    background-color: #d5e4fa;
    border-color: #2b7de0;
}

.snap .combo select {
    height: 25px;
    border-color: #999;
}

/* taskbar */
.taskbar {
    display: flex;
    align-items: center;
    height: 40px;
    flex: none;
    border-top: 1px solid #17364f;
    background: linear-gradient(90deg, #1f5f92 0, #2f83b8 90px, #4aa9d6 260px, #55aedc 420px, #3f97cc 700px, #3c8fca 820px, #2b7fc2 1000px, #1f6fb5 1250px, #1a65ae 1480px, #1c4f86 1520px, #193e6c 1920px);
}

.start {
    width: 36px;
    height: 36px;
    margin-left: 9px;
    border-radius: 50%;
    display: grid;
    place-items: center;
    border: 1px solid #8ab4d0;
    background: radial-gradient(circle at 50% 90%, #2fc0f0, #1a5a90 50%, #22486c);
}

.start svg {
    width: 24px;
    height: 24px;
    stroke: none;
}

.dots {
    width: 9px;
    height: 30px;
    background: radial-gradient(circle, #0d2c48 1px, transparent 1px) 0 0 / 3px 4px;
}

.start + .dots {
    margin: 0 9px 0 13px;
}

.app {
    width: 59px;
    height: 38px;
    margin-right: 3px;
    display: grid;
    place-items: center;
    border: 1px solid #1d4a6c;
    border-radius: 3px;
    box-shadow: inset 0 0 1px 1px rgba(255, 255, 255, 0.4);
    background: linear-gradient(135deg, rgba(255, 255, 255, 0.4), rgba(255, 255, 255, 0.05));
}

.app.current {
    background: linear-gradient(135deg, rgba(255, 255, 255, 0.8), rgba(255, 255, 255, 0.4));
}

.app svg {
    width: 32px;
    height: 32px;
    stroke: none;
}

.tray {
    margin-left: auto;
    display: flex;
    align-items: center;
    gap: 7px;
}

.tray svg {
    width: 16px;
    height: 16px;
    stroke: none;
}

.clock {
    width: 78px;
    margin-right: 3px;
    display: flex;
    flex-direction: column;
    align-items: center;
    line-height: 18px;
    color: #fff;
}

.desktop {
    width: 14px;
    height: 38px;
    margin-left: 12px;
    border: 1px solid #6f8aa8;
    background: linear-gradient(#3b587c, #152d4e);
}
```
